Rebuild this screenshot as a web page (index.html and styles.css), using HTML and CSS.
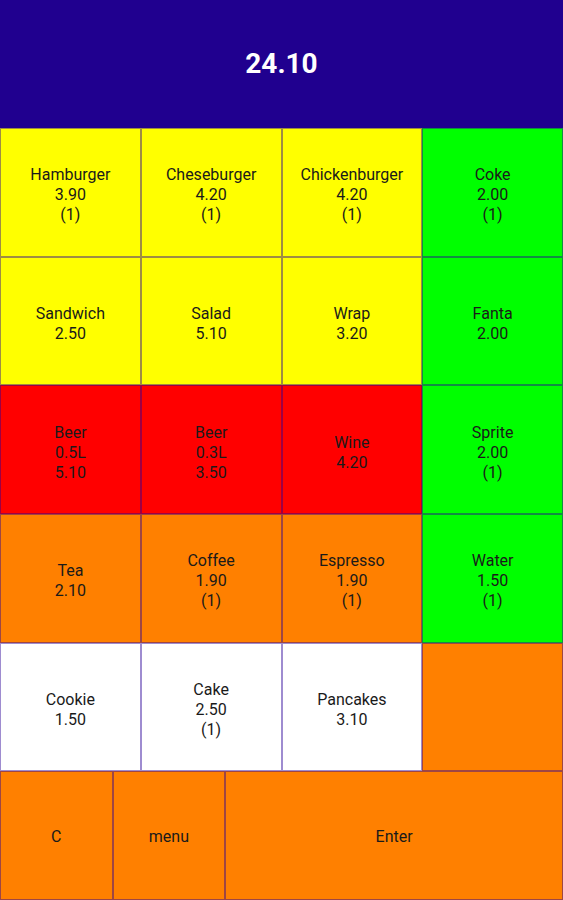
FILE: index.html
```html
<!DOCTYPE html>
<html lang="en">
<head>
  <meta charset="UTF-8">
  <meta name="viewport" content="width=device-width, initial-scale=1.0">
  <title>Cash Register</title>
  <link rel="stylesheet" href="styles.css">
</head>
<body>
  <div class="register">
    <div class="total-bar">
      <h1 id="total">24.10</h1>
    </div>

    <div class="product-grid">
      <div class="product food"><span>Hamburger</span><span>3.90</span><span>(1)</span></div>
      <div class="product food"><span>Cheseburger</span><span>4.20</span><span>(1)</span></div>
      <div class="product food"><span>Chickenburger</span><span>4.20</span><span>(1)</span></div>
      <div class="product soft"><span>Coke</span><span>2.00</span><span>(1)</span></div>

      <div class="product food"><span>Sandwich</span><span>2.50</span></div>
      <div class="product food"><span>Salad</span><span>5.10</span></div>
      <div class="product food"><span>Wrap</span><span>3.20</span></div>
      <div class="product soft"><span>Fanta</span><span>2.00</span></div>

      <div class="product alcohol"><span>Beer</span><span>0.5L</span><span>5.10</span></div>
      <div class="product alcohol"><span>Beer</span><span>0.3L</span><span>3.50</span></div>
      <div class="product alcohol"><span>Wine</span><span>4.20</span></div>
      <div class="product soft"><span>Sprite</span><span>2.00</span><span>(1)</span></div>

      <div class="product hot"><span>Tea</span><span>2.10</span></div>
      <div class="product hot"><span>Coffee</span><span>1.90</span><span>(1)</span></div>
      <div class="product hot"><span>Espresso</span><span>1.90</span><span>(1)</span></div>
      <div class="product soft"><span>Water</span><span>1.50</span><span>(1)</span></div>

      <div class="product sweet"><span>Cookie</span><span>1.50</span></div>
      <div class="product sweet"><span>Cake</span><span>2.50</span><span>(1)</span></div>
      <div class="product sweet"><span>Pancakes</span><span>3.10</span></div>
      <div class="product hot"></div>
    </div>

    <div class="action-bar">
      <button class="action">C</button>
      <button class="action">menu</button>
      <button class="action">Enter</button>
    </div>
  </div>
</body>
</html>
```

FILE: styles.css
```css
* {
  box-sizing: border-box;
  margin: 0;
  padding: 0;
}
body {
  font-family: Roboto, 'Noto Sans', Arial, sans-serif;
  background: #fff;
}
.register {
  width: 100%;
  height: 100vh;
  display: flex;
  flex-direction: column;
}
.total-bar {
  height: 128px;
  background: #20008f;
  display: flex;
  align-items: center;
  justify-content: center;
}
.total-bar h1 {
  color: white;
  font-size: 28px;
  font-weight: bold;
  margin-top: -2px;
}
.product-grid {
  flex: 5;
  display: grid;
  grid-template-columns: repeat(4, 1fr);
  grid-template-rows: repeat(5, 1fr);
}
.product, .action {
  border: 1px solid rgba(40, 0, 150, 0.45);
  display: flex;
  flex-direction: column;
  align-items: center;
  justify-content: center;
  font-size: 16px;
  line-height: 20px;
  color: #1a1a1a;
  text-align: center;
}
.product {
  padding-top: 6px;
}
.food { background: #ffff00; }
.soft { background: #00ff00; }
.alcohol { background: #ff0000; }
.hot { background: #ff8000; }
.sweet { background: #ffffff; }

/* bottom buttons: clear, menu, enter */
.action-bar {
  flex: 1;
  display: grid;
  grid-template-columns: 1fr 1fr 3fr;
}
.action {
  background: #ff8000;
  font-family: inherit;
  padding-top: 2px;
  cursor: pointer;
}
```
